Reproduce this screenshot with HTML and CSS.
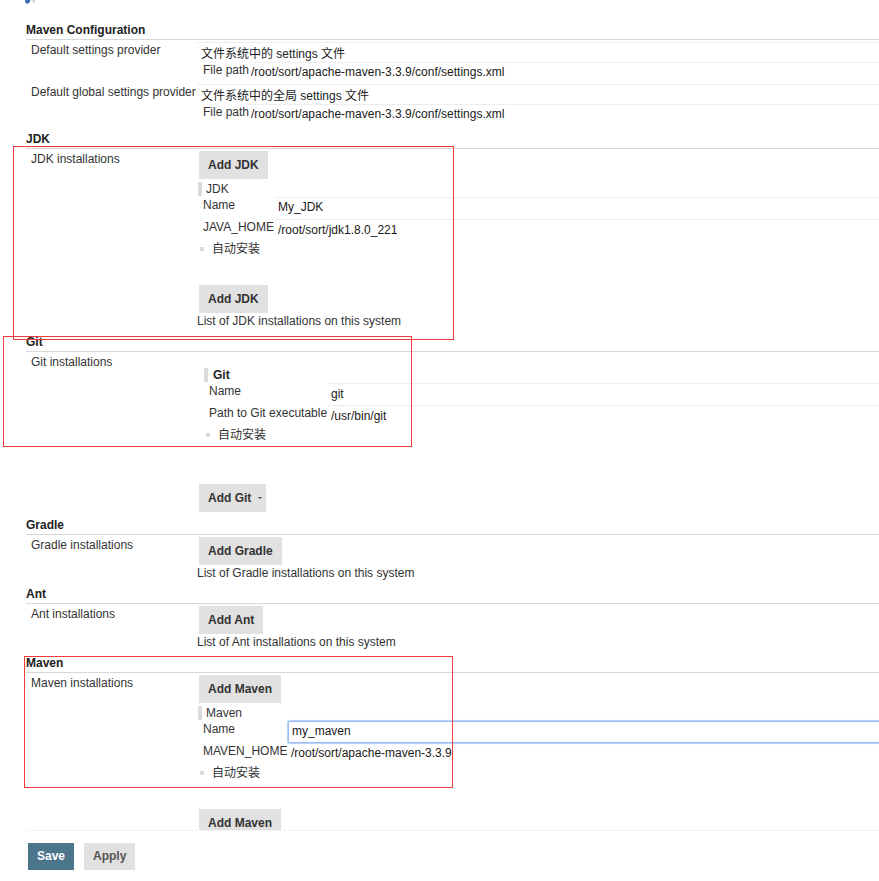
FILE: index.html
```html
<!DOCTYPE html>
<html lang="zh">
<head>
<meta charset="utf-8">
<title>Global Tool Configuration</title>
<link rel="stylesheet" href="styles.css">
</head>
<body>
<div class="topbar">
  <svg class="logo" width="14" height="5" viewBox="0 0 14 5"><path d="M1 0 L6.5 0 L5.5 2.5 Q3.5 4.5 1.5 3 Z" fill="#3d6db5"/><path d="M8.5 0 L11 0 L10.5 2.5 L8.5 2.5 Z" fill="#cfcfcf"/></svg>
</div>
<div class="page">
  <section>
    <div class="head">Maven Configuration</div>
    <div class="row">
      <div class="lbl">Default settings provider</div>
      <div class="val">
        <div class="sel">文件系统中的 settings 文件</div>
        <div class="field fp"><div class="flbl">File path</div><div class="fval">/root/sort/apache-maven-3.3.9/conf/settings.xml</div></div>
      </div>
    </div>
    <div class="row">
      <div class="lbl">Default global settings provider</div>
      <div class="val">
        <div class="sel">文件系统中的全局 settings 文件</div>
        <div class="field fp"><div class="flbl">File path</div><div class="fval">/root/sort/apache-maven-3.3.9/conf/settings.xml</div></div>
      </div>
    </div>
  </section>

  <section>
    <div class="head">JDK</div>
    <div class="row">
      <div class="lbl">JDK installations</div>
      <div class="val">
        <div class="btn">Add JDK</div>
        <div class="chunk">
          <div class="chead"><span class="grip"></span><span>JDK</span></div>
          <div class="field jdk"><div class="flbl">Name</div><div class="fval">My_JDK</div></div>
          <div class="field jdk"><div class="flbl">JAVA_HOME</div><div class="fval fval-low">/root/sort/jdk1.8.0_221</div></div>
          <div class="chk"><span class="box"></span><span>自动安装</span></div>
        </div>
        <div class="btn btn-after">Add JDK</div>
        <div class="hint">List of JDK installations on this system</div>
      </div>
    </div>
  </section>

  <section>
    <div class="head">Git</div>
    <div class="row">
      <div class="lbl">Git installations</div>
      <div class="val">
        <div class="chunk chunk-git">
          <div class="chead"><span class="grip"></span><span class="ctitle-b">Git</span></div>
          <div class="field git"><div class="flbl">Name</div><div class="fval fval-low">git</div></div>
          <div class="field git"><div class="flbl">Path to Git executable</div><div class="fval fval-low">/usr/bin/git</div></div>
          <div class="chk"><span class="box"></span><span>自动安装</span></div>
        </div>
        <div class="btn btn-git">Add Git<span class="caret"></span></div>
      </div>
    </div>
  </section>

  <section>
    <div class="head">Gradle</div>
    <div class="row">
      <div class="lbl">Gradle installations</div>
      <div class="val">
        <div class="btn">Add Gradle</div>
        <div class="hint">List of Gradle installations on this system</div>
      </div>
    </div>
  </section>

  <section>
    <div class="head">Ant</div>
    <div class="row">
      <div class="lbl">Ant installations</div>
      <div class="val">
        <div class="btn">Add Ant</div>
        <div class="hint">List of Ant installations on this system</div>
      </div>
    </div>
  </section>

  <section>
    <div class="head">Maven</div>
    <div class="row">
      <div class="lbl">Maven installations</div>
      <div class="val">
        <div class="btn">Add Maven</div>
        <div class="chunk">
          <div class="chead"><span class="grip"></span><span>Maven</span></div>
          <div class="field mvn"><div class="flbl">Name</div><div class="fval input">my_maven</div></div>
          <div class="field mvn"><div class="flbl">MAVEN_HOME</div><div class="fval fval-low">/root/sort/apache-maven-3.3.9</div></div>
          <div class="chk"><span class="box"></span><span>自动安装</span></div>
        </div>
        <div class="btn btn-after">Add Maven</div>
      </div>
    </div>
  </section>
</div>

<div class="bottombar">
  <div class="sbtn save">Save</div>
  <div class="sbtn apply">Apply</div>
</div>

<div class="mark m1"></div>
<div class="mark m2"></div>
<div class="mark m3"></div>
</body>
</html>
```

FILE: styles.css
```css
* { box-sizing: border-box; }
html, body { margin: 0; background: #fff; }
body {
  font: 12px/16px "Liberation Sans", Arial, "Noto Sans CJK SC", sans-serif;
  color: #333;
  width: 879px;
  height: 881px;
  overflow: hidden;
  position: relative;
}

.topbar { height: 17px; }
.logo { display: block; margin-left: 24px; }

.page { padding-left: 26px; }

.head {
  font-weight: bold;
  color: #222;
  padding: 5px 0 1px;
  border-bottom: 1px solid #d8d8d8;
  margin-bottom: 2px;
}

.row { display: grid; grid-template-columns: 171px 1fr; }
.lbl { padding-left: 5px; white-space: nowrap; }
.val { min-width: 0; }

.sel {
  border-top: 1px solid #eeeeee;
  height: 20px;
  padding: 2px 0 0 4px;
  line-height: 18px;
  color: #222;
}

.field { display: grid; height: 22px; }
.fp { grid-template-columns: 51px 1fr; }
.jdk { grid-template-columns: 78px 1fr; }
.git { grid-template-columns: 125px 1fr; }
.mvn { grid-template-columns: 91px 1fr; }

.flbl { padding-left: 6px; white-space: nowrap; }
.fval {
  border-top: 1px solid #eeeeee;
  padding: 1px 3px 0;
  color: #1a1a1a;
  white-space: nowrap;
}
.fval-low { padding-top: 2px; }
.fp .fval { padding-top: 1px; }
.fval.input {
  border: 1px solid #9dbcf3;
  border-right: none;
  border-radius: 2px 0 0 2px;
  box-shadow: 0 0 1px 0.5px rgba(150, 185, 245, 0.7);
  padding-top: 1px;
}
.mvn .fval-low { border-top: none; padding-top: 2px; }

.chunk { margin-top: 2px; }
.chunk-git { margin: 13px 0 0 6px; }
.chead { display: flex; align-items: center; height: 16px; }
.grip {
  width: 4px;
  height: 14px;
  margin: 0 4px 0 1px;
  background-color: #f4f4f4;
  background-image: radial-gradient(circle, #dadada 0.8px, transparent 1px);
  background-size: 2px 2px;
}
.chunk-git .grip { margin-right: 5px; }
.ctitle-b { font-weight: bold; color: #222; }

.chk { display: flex; align-items: center; height: 16px; padding-left: 3px; }
.box {
  width: 4px;
  height: 4px;
  background: #d9d9d9;
  margin-right: 8px;
}

.btn {
  display: block;
  width: fit-content;
  height: 28px;
  line-height: 28px;
  padding: 0 9px;
  margin-left: 2px;
  background: #e1e1e1;
  color: #333;
  font-weight: bold;
  white-space: nowrap;
}
.btn-after { margin-top: 28px; }
.btn-git { margin-top: 41px; padding-right: 4px; }
.caret {
  display: inline-block;
  vertical-align: middle;
  margin: -2px 0 0 7px;
  width: 0;
  height: 0;
  border-left: 2px solid transparent;
  border-right: 2px solid transparent;
  border-top: 2px solid #444;
}

.hint { color: #333; }

.bottombar {
  position: absolute;
  left: 0;
  right: 0;
  top: 830px;
  bottom: 0;
  background: #fff;
  padding: 13px 0 0 28px;
  display: flex;
  align-items: flex-start;
  gap: 10px;
}
.bottombar::before {
  content: "";
  position: absolute;
  left: 26px;
  right: 0;
  top: 0;
  border-top: 1px dotted #e9e9e9;
}
.sbtn {
  height: 27px;
  line-height: 27px;
  padding: 0 9px;
  font-weight: bold;
}
.save { background: #4b758b; color: #fff; }
.apply { background: #e1e1e1; color: #555; }

.mark { position: absolute; border: 1px solid #ee3b3b; pointer-events: none; }
.m1 { left: 13px; top: 146px; width: 441px; height: 194px; }
.m2 { left: 3px; top: 336px; width: 409px; height: 111px; }
.m3 { left: 24px; top: 656px; width: 429px; height: 132px; }
```
